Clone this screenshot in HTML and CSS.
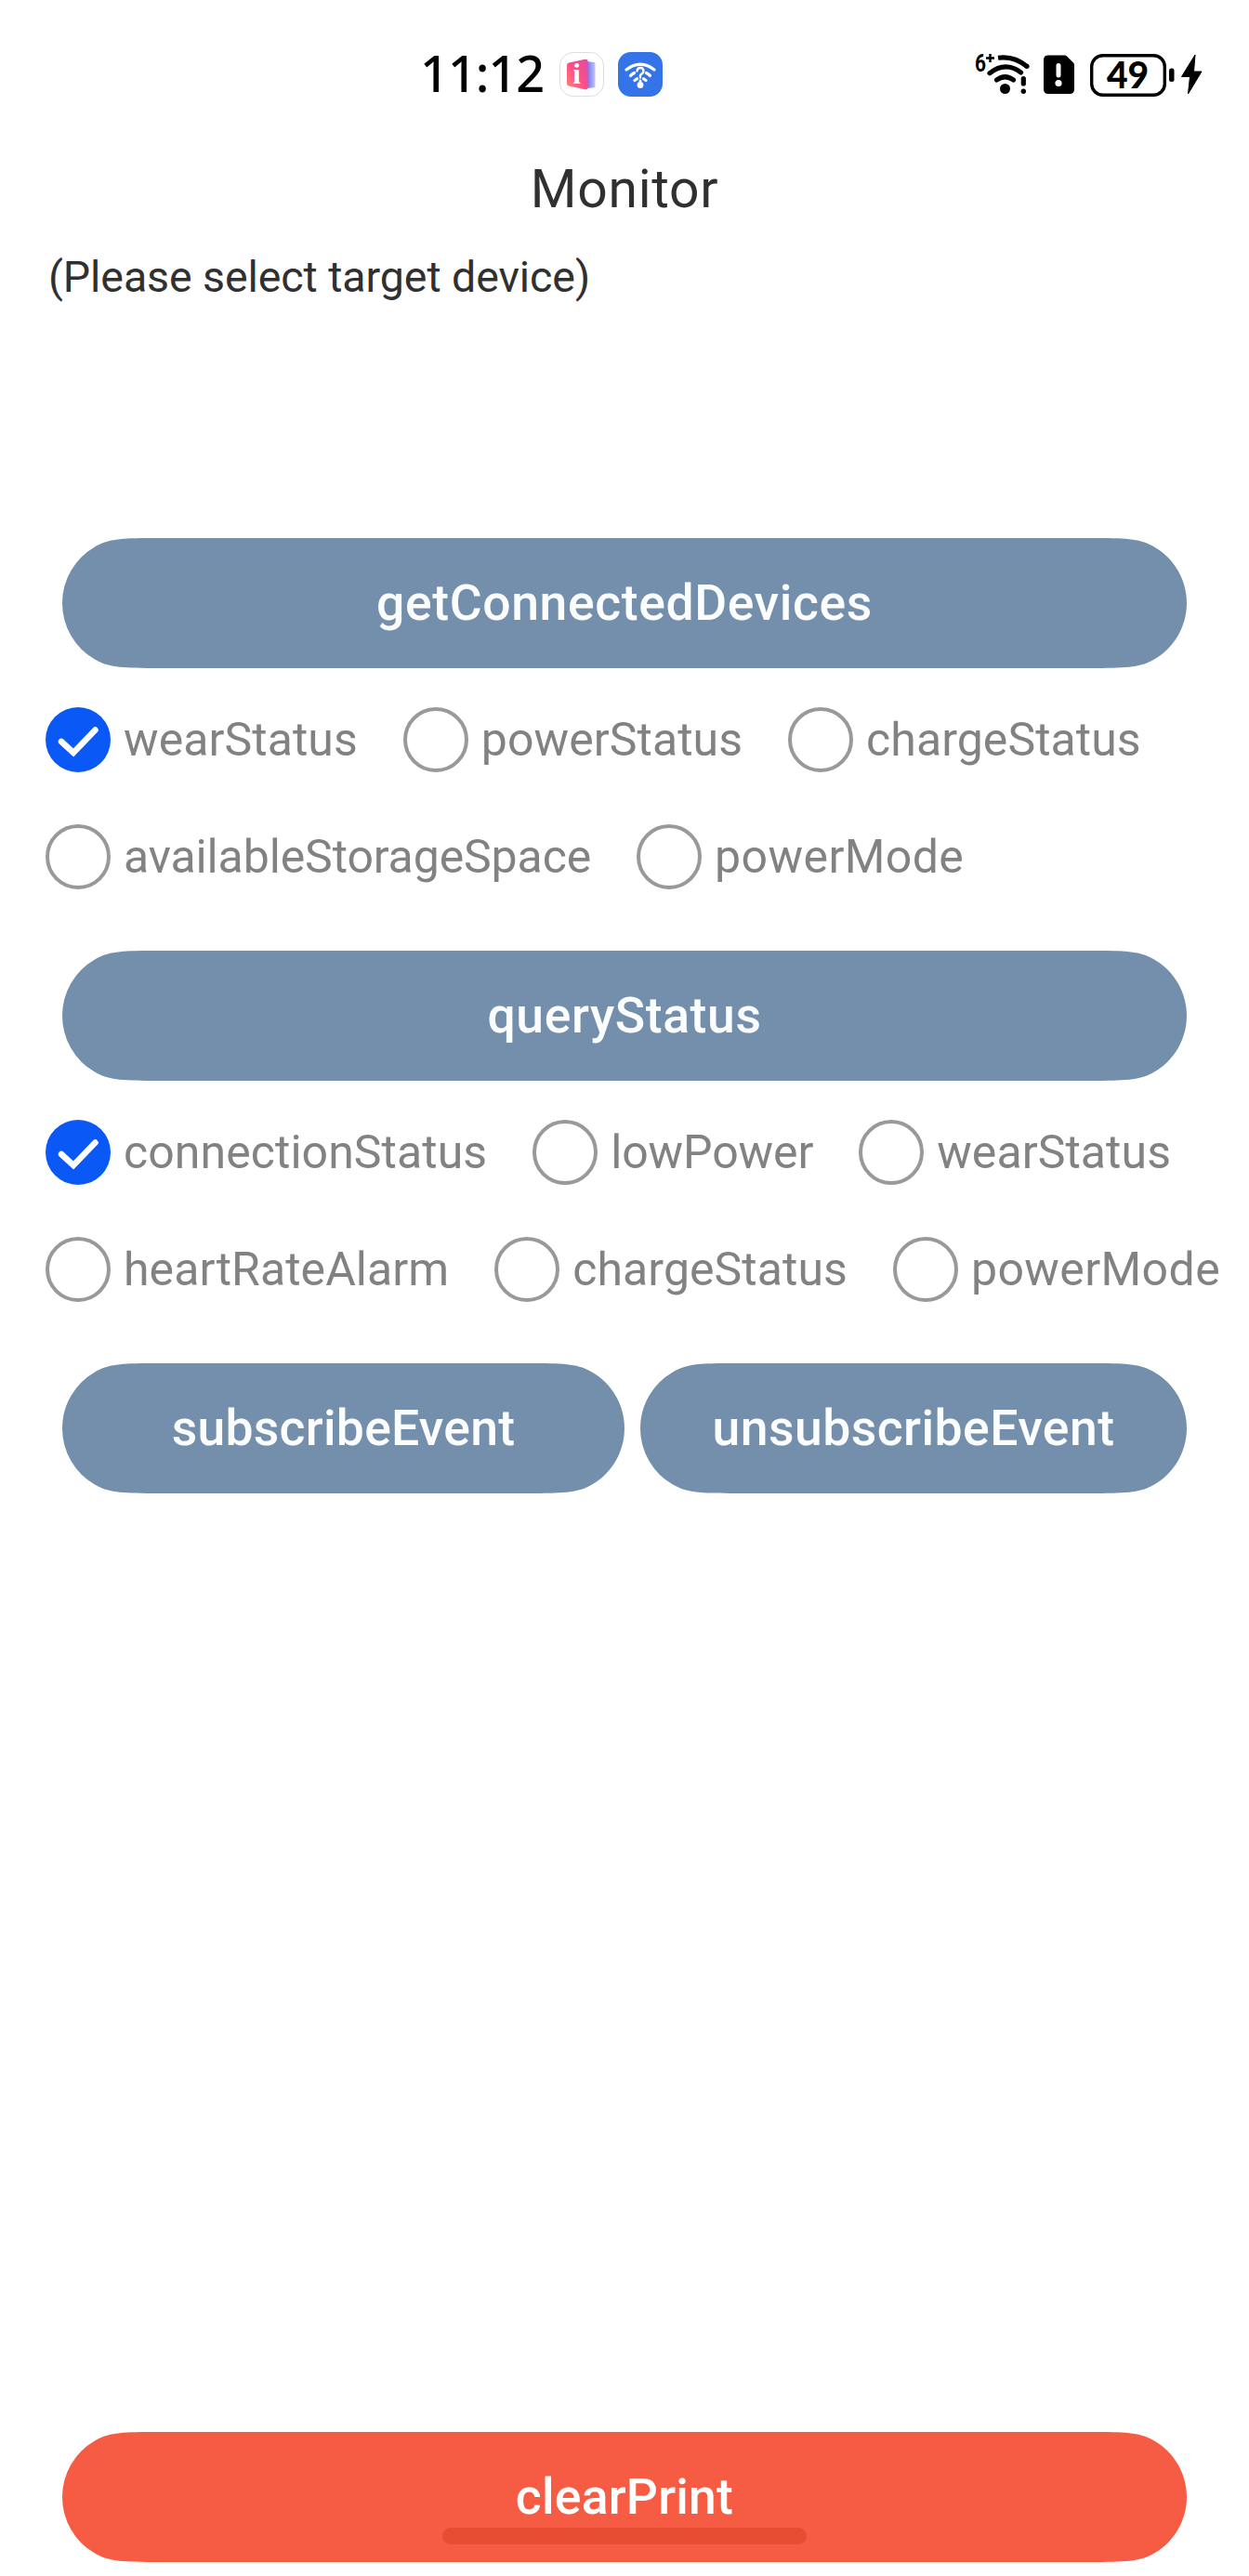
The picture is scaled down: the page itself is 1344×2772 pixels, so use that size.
FILE: index.html
```html
<!DOCTYPE html>
<html lang="en">
<head>
<meta charset="utf-8">
<title>Monitor</title>
<link rel="stylesheet" href="styles.css">
</head>
<body>
<header class="status-bar">
  <div class="status-left">
    <span class="clock">11:12</span>
    <svg class="app-icon" viewBox="0 0 48 48">
      <defs>
        <linearGradient id="panel" x1="0" y1="1" x2="1" y2="0">
          <stop offset="0" stop-color="#ff8378"/><stop offset=".5" stop-color="#ff4e86"/><stop offset="1" stop-color="#dd4ba4"/>
        </linearGradient>
        <linearGradient id="back" x1="0" y1="0" x2="1" y2="0">
          <stop offset="0" stop-color="#6a6cf0"/><stop offset="1" stop-color="#c5c4fb"/>
        </linearGradient>
      </defs>
      <rect x=".5" y=".5" width="47" height="47" rx="14" fill="#fff" stroke="#dedcde"/>
      <path d="M29 10l8.500 1q1 .2 1 1v25q0 1-1 1.200L29 39z" fill="url(#back)"/>
      <path d="M10 11.500L27.500 7.800q3-.4 3 2v28.500q0 2.500-3 2L10 36.500q-2-.5-2-2.500V14q0-2 2-2.500z" fill="url(#panel)"/>
      <text x="18.500" y="34" class="info-glyph">i</text>
    </svg>
    <svg class="app-icon app-icon-wifi" viewBox="0 0 48 48">
      <rect width="48" height="48" rx="14" fill="#3473e8"/>
      <g fill="none" stroke="#fff" stroke-width="3.200" stroke-linecap="round">
        <path d="M9 19Q24 7.500 39 19M13.500 25.500Q14.500 24 17.500 22.500M34.500 25.500Q33.500 24 30.500 22.500M18 30.500l2.500-1.700M30 30.500l-2.500-1.700"/>
        <path d="M20.500 20.500q.3-3.500 3.500-3.500t3.500 3.300q0 2-2 3.300T24 26.500v1" stroke-width="2.400"/>
      </g>
      <circle cx="24" cy="31" r="1.500" fill="#fff"/>
      <circle cx="24" cy="35.500" r="3.400" fill="#fff"/>
    </svg>
  </div>
  <svg class="status-right" viewBox="1046 50 252 60">
    <text x="1049" y="77" class="six" textLength="12" lengthAdjust="spacingAndGlyphs">6</text>
    <path d="M1065.500 58v9M1061 62.500h9" stroke="#000" stroke-width="2.400"/>
    <g fill="none" stroke="#000" stroke-width="5.200">
      <path d="M1074 62.300Q1091 59.800 1105 71.500"/>
      <path d="M1065 78.700Q1082 65.500 1098.500 78M1072.500 86Q1081.500 79.500 1090.500 86M1101.300 84.500v5.500" stroke-linecap="round"/>
    </g>
    <circle cx="1105" cy="71.300" r="2.600"/>
    <circle cx="1081.500" cy="95.500" r="5.500"/>
    <circle cx="1101.300" cy="98.300" r="2.700"/>
    <path d="M1128 59.500h17.500q1.500 0 2.500 1l7 7q1 1 1 2.500v26q0 5-5 5h-23q-5 0-5-5v-31.500q0-5 5-5z"/>
    <path d="M1139 70.500v10.500" stroke="#fff" stroke-width="5" stroke-linecap="round"/>
    <circle cx="1139" cy="89.500" r="3.600" fill="#fff"/>
    <rect x="1174.700" y="59.700" width="78.600" height="42.600" rx="12" fill="none" stroke="#000" stroke-width="3.400"/>
    <text x="1213.500" y="95" class="battery-level">49</text>
    <rect x="1258" y="73.500" width="5.500" height="14.500" rx="2.500"/>
    <path d="M1286 59L1271.500 82.500h9L1278.500 101 1293 77h-8.500z" stroke="#000" stroke-linejoin="round"/>
  </svg>
</header>

<main class="page">
  <h1 class="title">Monitor</h1>
  <p class="hint">(Please select target device)</p>

  <button class="btn btn-full btn-connect">getConnectedDevices</button>
  <div class="options">
    <div class="options-row">
      <label class="option"><span class="radio radio-on"><svg viewBox="0 0 70 70"><path d="M17 37l13 12 23.500-24.500"/></svg></span>wearStatus</label>
      <label class="option"><span class="radio"></span>powerStatus</label>
      <label class="option"><span class="radio"></span>chargeStatus</label>
    </div>
    <div class="options-row">
      <label class="option option-tight"><span class="radio"></span>availableStorageSpace</label>
      <label class="option option-wide"><span class="radio"></span>powerMode</label>
    </div>
  </div>

  <button class="btn btn-full btn-query">queryStatus</button>
  <div class="options">
    <div class="options-row">
      <label class="option"><span class="radio radio-on"><svg viewBox="0 0 70 70"><path d="M17 37l13 12 23.500-24.500"/></svg></span>connectionStatus</label>
      <label class="option option-tight"><span class="radio"></span>lowPower</label>
      <label class="option"><span class="radio"></span>wearStatus</label>
    </div>
    <div class="options-row">
      <label class="option"><span class="radio"></span>heartRateAlarm</label>
      <label class="option"><span class="radio"></span>chargeStatus</label>
      <label class="option option-wide"><span class="radio"></span>powerMode</label>
    </div>
  </div>

  <div class="btn-pair">
    <button class="btn btn-subscribe">subscribeEvent</button>
    <button class="btn btn-unsubscribe">unsubscribeEvent</button>
  </div>

  <button class="btn btn-full btn-clear">clearPrint<span class="home-indicator"></span></button>
</main>
</body>
</html>
```
FILE: styles.css
```css
* { box-sizing: border-box; }

body {
  margin: 0;
  width: 1344px;
  height: 2772px;
  display: flex;
  flex-direction: column;
  background: #fff;
  font-family: Roboto, "Noto Sans", sans-serif;
  overflow: hidden;
}

/* status bar */
.status-bar {
  height: 160px;
  flex: none;
  display: flex;
  justify-content: space-between;
  align-items: center;
  padding: 0 46px 0 452px;
}
.status-left { display: flex; align-items: center; }
.clock {
  width: 150px;
  padding-bottom: 4px;
  font: 500 54px/60px "Noto Sans", sans-serif;
  letter-spacing: -1px;
  color: #000;
}
.app-icon { width: 48px; height: 48px; display: block; }
.app-icon-wifi { margin-left: 15px; }
.info-glyph { font: 700 31px "Liberation Serif", serif; fill: #fff; text-anchor: middle; }
.status-right { width: 252px; height: 60px; display: block; }
.six { font: 700 26px Roboto, sans-serif; }
.battery-level { font: 900 39px Lato, sans-serif; text-anchor: middle; }

/* page */
.page {
  flex: 1;
  display: flex;
  flex-direction: column;
  padding: 0 67px 15px 49px;
}
.title {
  margin: 11px 0 0 18px;
  font-size: 57px;
  line-height: 66px;
  font-weight: 400;
  letter-spacing: .7px;
  text-align: center;
  color: #303030;
}
.hint {
  margin: 31px 0 0 3px;
  font-size: 46.500px;
  line-height: 60px;
  letter-spacing: -.08px;
  color: #303030;
}

/* buttons */
.btn {
  height: 140px;
  flex: none;
  padding: 0;
  border: 0;
  display: flex;
  align-items: center;
  justify-content: center;
  background: #748fac;
  color: #fcfdfe;
  font: 500 53.500px/64px Roboto, sans-serif;
  letter-spacing: .6px;
}
.btn-full {
  width: 1210px;
  margin-left: 18px;
  clip-path: path("M0 70A70 70 0 0 1 35 9.400C49 1.300 62 0 97 0H1113C1148 0 1161 1.300 1175 9.400A70 70 0 0 1 1175 130.600C1161 138.700 1148 140 1113 140H97C62 140 49 138.700 35 130.600A70 70 0 0 1 0 70Z");
}
.btn-connect { margin-top: 251px; }
.btn-query { margin-top: 66px; }
.btn-pair { margin: 66px 0 0 18px; display: flex; gap: 17px; }
.btn-subscribe {
  width: 605px;
  letter-spacing: .26px;
  clip-path: path("M0 70A70 70 0 0 1 35 9.400C49 1.300 62 0 97 0H508C543 0 556 1.300 570 9.400A70 70 0 0 1 570 130.600C556 138.700 543 140 508 140H97C62 140 49 138.700 35 130.600A70 70 0 0 1 0 70Z");
}
.btn-unsubscribe {
  width: 588px;
  letter-spacing: .45px;
  clip-path: path("M0 70A70 70 0 0 1 35 9.400C49 1.300 62 0 97 0H491C526 0 539 1.300 553 9.400A70 70 0 0 1 553 130.600C539 138.700 526 140 491 140H97C62 140 49 138.700 35 130.600A70 70 0 0 1 0 70Z");
}
.btn-clear {
  position: relative;
  margin-top: auto;
  background: #f65b43;
  color: #fff;
  letter-spacing: .2px;
}
.home-indicator {
  position: absolute;
  left: 409px;
  top: 103px;
  width: 392px;
  height: 18px;
  border-radius: 9px;
  background: #e64d33;
}

/* radio options */
.options { display: flex; flex-direction: column; gap: 56px; margin-top: 42px; }
.options-row { display: flex; gap: 49px; margin-right: -67px; }
.option {
  display: flex;
  align-items: center;
  gap: 14px;
  height: 70px;
  font-size: 50px;
  line-height: 70px;
  letter-spacing: .06px;
  white-space: nowrap;
  color: #828282;
}
.option-wide { letter-spacing: .4px; }
.option-tight { letter-spacing: -.12px; }
.radio {
  width: 70px;
  height: 70px;
  flex: none;
  border: 4px solid #999;
  border-radius: 50%;
}
.radio-on { border: 0; background: #0a59f7; }
.radio-on svg { display: block; width: 70px; height: 70px; }
.radio-on path {
  fill: none;
  stroke: #fff;
  stroke-width: 6.500;
  stroke-linecap: round;
  stroke-linejoin: miter;
}
```
